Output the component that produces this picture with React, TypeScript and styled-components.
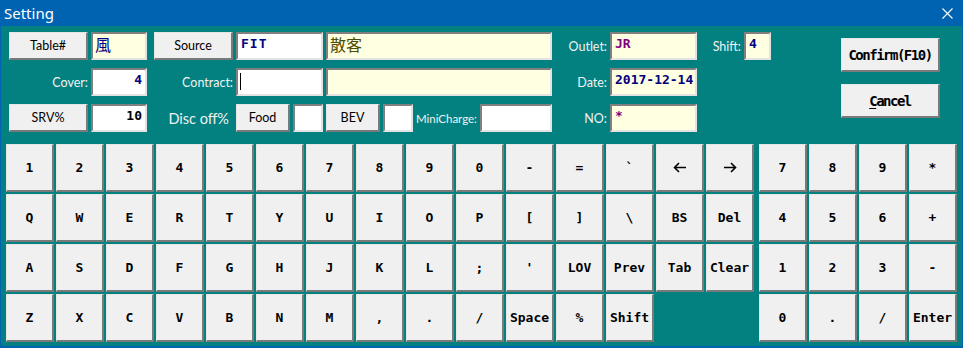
import React from 'react';
import styled, { createGlobalStyle } from 'styled-components';

const Global = createGlobalStyle`
  html, body { margin: 0; padding: 0; background: #fff; }
  body { width: 963px; height: 348px; overflow: hidden; }
`;

const TEAL = '#038080';
const BLUE = '#0063b1';

const Window = styled.div`
  width: 963px;
  height: 348px;
  box-sizing: border-box;
  display: flex;
  flex-direction: column;
  background: ${BLUE};
`;

const TitleBar = styled.div`
  height: 26px;
  flex: none;
  display: flex;
  align-items: center;
  justify-content: space-between;
  padding: 0 10px 0 4px;
  color: #fff;
  font: 15px "Noto Sans", "Open Sans", sans-serif;
`;

const CloseIcon = () => (
  <svg width="11" height="11" viewBox="0 0 11 11">
    <path d="M0.5 0.5 L10.5 10.5 M10.5 0.5 L0.5 10.5" stroke="#fff" strokeWidth="1.1" fill="none" />
  </svg>
);

const Body = styled.div`
  flex: 1;
  margin: 0 1px 2px 1px;
  background: ${TEAL};
  display: flex;
  flex-direction: column;
  padding-top: 6px;
`;

const Top = styled.div`
  display: flex;
  padding-left: 8px;
`;

const Form = styled.div`
  display: grid;
  grid-template-columns: 79px 56px 83px 87px 226px 52px 87px 41px 27px;
  grid-auto-rows: 28px;
  column-gap: 3px;
  row-gap: 8px;
`;

const Button = styled.div<{ $w?: number }>`
  box-sizing: border-box;
  width: ${(p) => (p.$w ? `${p.$w}px` : '100%')};
  height: 100%;
  background: #f0f0f0;
  border-style: solid;
  border-width: 1px 2px 2px 1px;
  border-color: #e6e6e6 #7a7a7a #7a7a7a #e6e6e6;
  display: flex;
  align-items: center;
  justify-content: center;
  color: #000;
  font: 12.5px Lato, "Noto Sans", sans-serif;
  flex: none;
`;

const Field = styled.div<{ $bg?: string; $color?: string; $align?: string; $w?: number; $cjk?: boolean }>`
  box-sizing: border-box;
  width: ${(p) => (p.$w ? `${p.$w}px` : '100%')};
  height: 100%;
  flex: none;
  background: ${(p) => p.$bg || '#fff'};
  border-style: solid;
  border-width: 2px;
  border-color: #808080 #e3e3e3 #e3e3e3 #808080;
  display: flex;
  align-items: flex-start;
  justify-content: ${(p) => (p.$align === 'right' ? 'flex-end' : 'flex-start')};
  padding: ${(p) => (p.$cjk ? '0 2px' : '3px 3px')};
  color: ${(p) => p.$color || '#000'};
  font: ${(p) =>
    p.$cjk
      ? `16px "Noto Sans CJK TC", "Noto Sans CJK SC", sans-serif`
      : `bold 13px "DejaVu Sans Mono", monospace`};
  line-height: ${(p) => (p.$cjk ? '21px' : '14px')};
  overflow: hidden;
  white-space: pre;
`;

const Caret = styled.span`
  display: block;
  width: 1px;
  height: 17px;
  background: #000;
  margin: 0 0 0 -1px;
`;

const Label = styled.div<{ $size?: number }>`
  display: flex;
  align-items: center;
  justify-content: flex-end;
  color: #f2f2f2;
  font: ${(p) => p.$size || 12.5}px Lato, "Noto Sans", sans-serif;
  white-space: nowrap;
`;

const BigLabel = styled(Label)`
  padding-right: 4px;
`;

const Cell = styled.div<{ $end?: boolean }>`
  display: flex;
  gap: 3px;
  justify-content: ${(p) => (p.$end ? 'flex-end' : 'flex-start')};
  align-items: stretch;
`;

const InlineLabel = styled(Label)`
  width: 61px;
  flex: none;
`;

const Actions = styled.div`
  margin-left: 70px;
  padding-top: 6px;
  display: flex;
  flex-direction: column;
  gap: 12px;
`;

const ActionButton = styled.div`
  box-sizing: border-box;
  width: 99px;
  height: 34px;
  background: #f0f0f0;
  border-style: solid;
  border-width: 1px 2px 2px 1px;
  border-color: #e6e6e6 #7a7a7a #7a7a7a #e6e6e6;
  display: flex;
  align-items: center;
  justify-content: center;
  font: bold 14px "DejaVu Sans Mono", monospace;
  letter-spacing: -1.5px;
  color: #000;
  u { text-decoration: underline; text-underline-offset: 2px; }
`;

const Keyboard = styled.div`
  display: flex;
  margin-top: 12px;
  padding-left: 5px;
  gap: 5px;
`;

const KeyGrid = styled.div<{ $cols: number }>`
  display: grid;
  grid-template-columns: repeat(${(p) => p.$cols}, 48px);
  grid-auto-rows: 48px;
  gap: 2px;
`;

const Key = styled.div`
  box-sizing: border-box;
  background: #f0f0f0;
  border-style: solid;
  border-width: 1px 2px 2px 1px;
  border-color: #e6e6e6 #7a7a7a #7a7a7a #e6e6e6;
  display: flex;
  align-items: center;
  justify-content: center;
  font: bold 13px "DejaVu Sans Mono", monospace;
  color: #000;
  white-space: pre;
`;

const Arrow = ({ dir }: { dir: 'left' | 'right' }) => (
  <svg width="14" height="11" viewBox="0 0 14 11" style={{ transform: dir === 'right' ? 'scaleX(-1)' : undefined }}>
    <path d="M1.5 5.5 H13 M6 1 L1.5 5.5 L6 10" stroke="#000" strokeWidth="1.6" fill="none" />
  </svg>
);

const mainRows: string[][] = [
  ['1', '2', '3', '4', '5', '6', '7', '8', '9', '0', '-', '=', '`', '←', '→'],
  ['Q', 'W', 'E', 'R', 'T', 'Y', 'U', 'I', 'O', 'P', '[', ']', '\\', 'BS', 'Del'],
  ['A', 'S', 'D', 'F', 'G', 'H', 'J', 'K', 'L', ';', "'", 'LOV', 'Prev', 'Tab', 'Clear'],
  ['Z', 'X', 'C', 'V', 'B', 'N', 'M', ',', '.', '/', 'Space', '%', 'Shift'],
];

const numRows: string[][] = [
  ['7', '8', '9', '*'],
  ['4', '5', '6', '+'],
  ['1', '2', '3', '-'],
  ['0', '.', '/', 'Enter'],
];

const renderKey = (k: string, i: number) => (
  <Key key={i}>
    {k === '←' ? <Arrow dir="left" /> : k === '→' ? <Arrow dir="right" /> : k}
  </Key>
);

const YELLOW = '#ffffe1';
const NAVY = '#000080';
const PURPLE = '#800080';
const OLIVE = '#4d4d00';

export default function App() {
  return (
    <>
      <Global />
      <Window>
        <TitleBar>
          <span>Setting</span>
          <CloseIcon />
        </TitleBar>
        <Body>
          <Top>
            <Form>
              {/* row 1 */}
              <Button>Table#</Button>
              <Field $bg={YELLOW} $color={NAVY} $cjk>風</Field>
              <Cell $end>
                <Button $w={79}>Source</Button>
              </Cell>
              <Field $color={NAVY} style={{ letterSpacing: '1px' }}>FIT</Field>
              <Field $bg={YELLOW} $color={OLIVE} $cjk>散客</Field>
              <Label>Outlet:</Label>
              <Field $bg={YELLOW} $color={PURPLE}>JR</Field>
              <Label>Shift:</Label>
              <Field $bg={YELLOW} $color={NAVY}>4</Field>

              {/* row 2 */}
              <Label>Cover:</Label>
              <Field $color={NAVY} $align="right">4</Field>
              <Label>Contract:</Label>
              <Field>
                <Caret />
              </Field>
              <Field $bg={YELLOW} />
              <Label>Date:</Label>
              <Field $bg={YELLOW} $color={NAVY}>2017-12-14</Field>
              <span />
              <span />

              {/* row 3 */}
              <Button>SRV%</Button>
              <Field $align="right">10</Field>
              <BigLabel $size={14.5}>Disc off%</BigLabel>
              <Cell>
                <Button $w={54}>Food</Button>
                <Field $w={30} />
              </Cell>
              <Cell>
                <Button $w={54}>BEV</Button>
                <Field $w={30} />
                <InlineLabel $size={11.5}>MiniCharge:</InlineLabel>
                <Field $w={72} />
              </Cell>
              <Label>NO:</Label>
              <Field $bg={YELLOW} $color={PURPLE}>*</Field>
            </Form>
            <Actions>
              <ActionButton>Confirm(F10)</ActionButton>
              <ActionButton>
                <span>
                  <u>C</u>ancel
                </span>
              </ActionButton>
            </Actions>
          </Top>
          <Keyboard>
            <KeyGrid $cols={15}>{mainRows.flat().map(renderKey)}</KeyGrid>
            <KeyGrid $cols={4}>{numRows.flat().map(renderKey)}</KeyGrid>
          </Keyboard>
        </Body>
      </Window>
    </>
  );
}
